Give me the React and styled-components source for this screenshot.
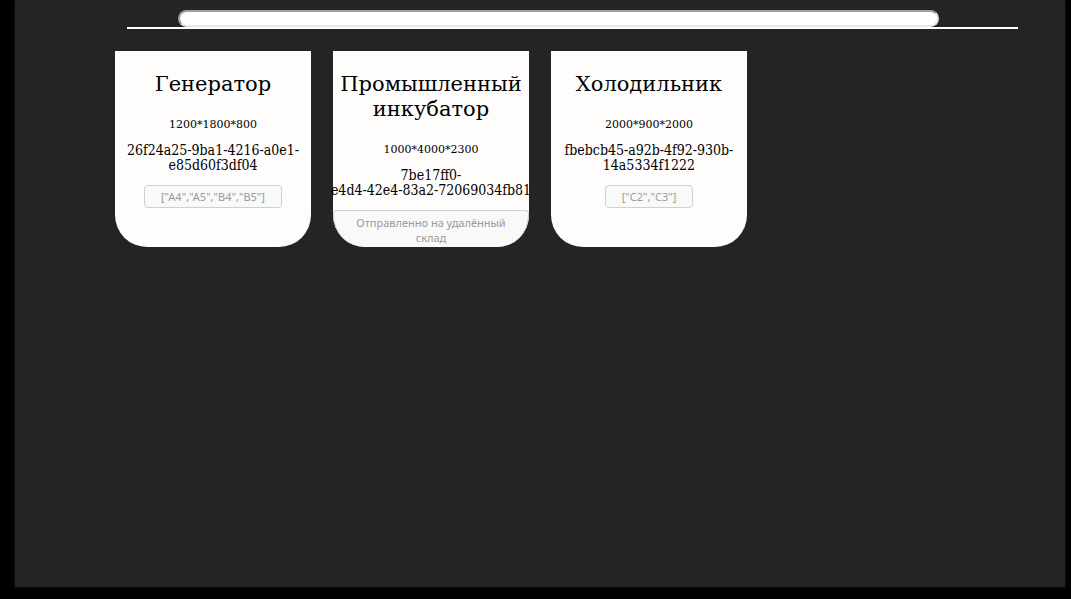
import React from "react";
import styled, { createGlobalStyle } from "styled-components";

const GlobalStyle = createGlobalStyle`
  * { box-sizing: border-box; }
  body {
    margin: 0;
    background: #000;
    color: #000;
    font-family: "DejaVu Serif", serif;
  }
`;

const Panel = styled.main`
  display: flex;
  flex-direction: column;
  min-height: calc(100vh - 12px);
  margin: 0 6px 12px 15px;
  background: #242424;
  box-shadow: 0 0 5px #181818;
`;

const Header = styled.header`
  display: flex;
  flex-direction: column;
  align-items: center;
  margin: 0 47px 0 112px;
  padding-top: 10px;
  border-bottom: 2px solid #fff;
`;

const Search = styled.input`
  width: 761px;
  max-width: 100%;
  height: 17px;
  margin-right: 28px;
  padding: 0 12px;
  border: 2px solid #e6e6e6;
  border-top-color: #a0a0a0;
  border-left-color: #a0a0a0;
  border-radius: 10px;
  background: #fff;
  font-size: 11px;
  outline: none;
`;

const Cards = styled.section`
  display: flex;
  flex-wrap: wrap;
  gap: 22px;
  padding: 22px 100px;
`;

const Card = styled.article`
  display: flex;
  flex-direction: column;
  align-items: center;
  width: 196px;
  height: 196px;
  padding-top: 21px;
  border-radius: 0 0 32px 32px;
  background: #fffdfb;
  text-align: center;
`;

const Title = styled.h2`
  margin: 0 0 21px;
  font-size: 21px;
  font-weight: 400;
  line-height: 25px;
`;

const Size = styled.p`
  margin: 0 0 12px;
  font-size: 11px;
  line-height: 13px;
`;

const Id = styled.p`
  margin: 0 0 12px;
  font-family: "DejaVu Serif Condensed", "DejaVu Serif", serif;
  font-size: 14px;
  line-height: 15px;
  white-space: pre;
`;

const Place = styled.button`
  flex-shrink: 0;
  min-height: 23px;
  max-width: 100%;
  padding: ${(p) => (p.$flush ? "4px 18px 2px" : "3px 16px")};
  border: 1px solid #cfcfcf;
  border-bottom-width: ${(p) => (p.$flush ? "0" : "1px")};
  border-radius: ${(p) => (p.$flush ? "4px 4px 32px 32px" : "4px")};
  background: #f9f9f9;
  color: #999;
  font-family: "Noto Sans", sans-serif;
  font-size: 11px;
  line-height: 15px;
`;

const items = [
  { title: "Генератор", size: "1200*1800*800", id: "26f24a25-9ba1-4216-a0e1-\ne85d60f3df04", place: '["A4","A5","B4","B5"]' },
  { title: "Промышленный инкубатор", size: "1000*4000*2300", id: "7be17ff0-\ne4d4-42e4-83a2-72069034fb81", place: "Отправленно на удалённый склад", remote: true },
  { title: "Холодильник", size: "2000*900*2000", id: "fbebcb45-a92b-4f92-930b-\n14a5334f1222", place: '["C2","C3"]' },
];

export default function App() {
  return (
    <>
      <GlobalStyle />
      <Panel>
        <Header>
          <Search type="text" aria-label="Поиск" />
        </Header>
        <Cards>
          {items.map((item) => (
            <Card key={item.title}>
              <Title>{item.title}</Title>
              <Size>{item.size}</Size>
              <Id>{item.id}</Id>
              <Place type="button" disabled $flush={item.remote}>{item.place}</Place>
            </Card>
          ))}
        </Cards>
      </Panel>
    </>
  );
}
